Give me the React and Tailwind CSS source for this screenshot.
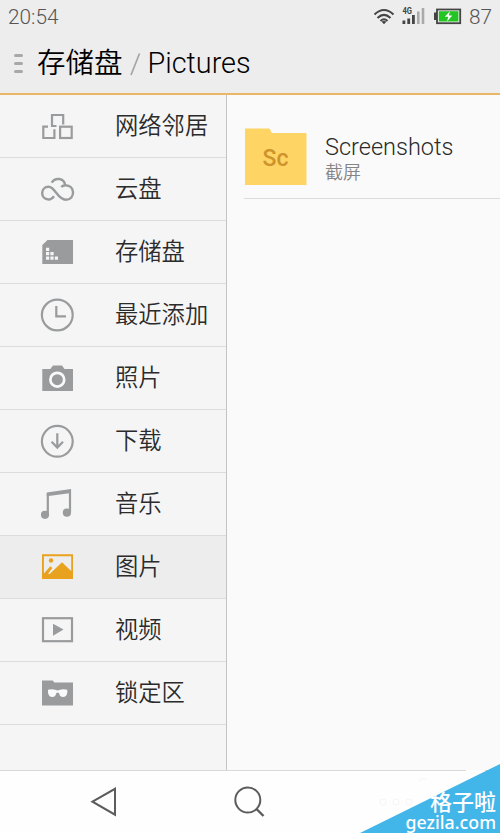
const GRAY = '#999b9d';

const icons = {
  network: (
    <g fill="none" stroke={GRAY} strokeWidth="2.200">
      <path d="M26.200 18.500V9H15V20H19.500" />
      <path d="M11 20.700H6.300V32H17.400V23.300" />
      <rect x="23.100" y="20.700" width="11.600" height="11.300" />
    </g>
  ),
  cloud: (
    <path
      d="M14.700 13.600C18 8.300 27 8.500 28.200 16.200C38.500 16 38.500 30.700 29 30.700C20.500 30.700 18 17.700 11.700 17.700C3 17.700 3 30.500 11.700 30.500Q14.500 30.500 17 27.200M28.200 16.200Q26 16.300 24.200 18"
      fill="none" stroke={GRAY} strokeWidth="2.400"
    />
  ),
  storage: (
    <g>
      <path d="M5.300 13L10.500 8H36V32H5.300Z" fill={GRAY} />
      <path d="M9 15.700h3.200v3.200h-3.200zM9 20.100h3.200v3.200h-3.200zM13.400 20.100h3.200v3.200h-3.200zM9 24.500h3.200v3.200h-3.200zM13.400 24.500h3.200v3.200h-3.200zM17.800 24.500h3.200v3.200h-3.200z" fill="#f5f5f5" />
    </g>
  ),
  clock: (
    <g fill="none" stroke={GRAY} strokeWidth="2.200">
      <circle cx="20.300" cy="20" r="15.400" />
      <path d="M19.300 11V21.300H29" />
    </g>
  ),
  camera: (
    <g>
      <path d="M5.300 11H13.300L16 7.500H25L27.500 11H36V33H5.300Z" fill={GRAY} />
      <circle cx="20.300" cy="21.700" r="6.900" fill="none" stroke="#fafafa" strokeWidth="2.700" />
    </g>
  ),
  download: (
    <g fill="none" stroke={GRAY} strokeWidth="2.200">
      <circle cx="20.300" cy="20.300" r="15.400" />
      <path d="M20.300 12.300V26.500M14.600 20.800L20.300 26.600L26 20.800" />
    </g>
  ),
  music: (
    <g>
      <path d="M10.800 31V10.200L33 7V28.500" fill="none" stroke={GRAY} strokeWidth="2.200" />
      <path d="M9.800 8.600L34 5V8.900L9.800 12.300Z" fill={GRAY} />
      <circle cx="8" cy="30.800" r="4.100" fill={GRAY} />
      <circle cx="29.900" cy="28.700" r="4.100" fill={GRAY} />
    </g>
  ),
  picture: (
    <g fill="#e9a21d">
      <path fillRule="evenodd" d="M5 7.300H36V32H5ZM6.900 9.200V26.500L13.300 19.200L15.400 21L11.200 26.600L12.400 27.200L25 15.300L34.200 24V9.200Z" />
      <circle cx="14" cy="13.500" r="2.200" />
    </g>
  ),
  video: (
    <g>
      <rect x="6" y="8.200" width="29" height="23" fill="none" stroke={GRAY} strokeWidth="2.200" />
      <path d="M16 13.700L26.500 19.600L16 25.700Z" fill={GRAY} />
    </g>
  ),
  locked: (
    <g>
      <path d="M5 7.500H15.800L17.300 9.500H36V32.500H5Z" fill={GRAY} />
      <path d="M11 16.800Q15 15.500 19 17Q20.600 17.800 22.200 17Q26 15.500 30.300 16.800V19.500Q29.500 24.100 26 24.100Q22.700 24 22 20.100Q20.600 18.700 19.400 20.100Q18.500 24 15.500 24.100Q11.700 24 11 19.500Z" fill="#fafafa" />
    </g>
  ),
};

const items = [
  ['network', '网络邻居'],
  ['cloud', '云盘'],
  ['storage', '存储盘'],
  ['clock', '最近添加'],
  ['camera', '照片'],
  ['download', '下载'],
  ['music', '音乐'],
  ['picture', '图片'],
  ['video', '视频'],
  ['locked', '锁定区'],
];

function StatusBar() {
  return (
    <div className="flex h-[33px] items-center pl-2 pr-2 text-[20.800px] text-[#555]">
      <span className="pt-0.5">20:54</span>
      <div className="ml-auto flex items-center">
        <svg width="92" height="26" viewBox="370 4 92 26">
          <g fill="none" stroke="#444" strokeWidth="2">
            <path d="M374.500 14.500Q384 5.500 393.500 14.500" />
            <path d="M377.500 18Q384 11.800 390.500 18" />
            <path d="M380.500 21Q384 17.600 387.500 21" />
          </g>
          <path d="M381.700 21.700Q384 20 386.300 21.700L384 24.200Z" fill="#444" />
          <text x="402.500" y="13.800" fontSize="8.500" fontWeight="700" fill="#444" textLength="9.500" lengthAdjust="spacingAndGlyphs">4G</text>
          <path d="M402.500 20.500h2.800v3.500h-2.800zM407.300 18.500h2.800v5.500h-2.800zM412 15h2.800v9h-2.800z" fill="#444" />
          <path d="M417 11.500h2.600v12.500h-2.600zM421.700 8h2.600v16h-2.600z" fill="#aaa" />
          <rect x="434" y="12.500" width="3" height="7.500" fill="#444" />
          <rect x="437" y="9.500" width="23.200" height="13.700" fill="#f3f3f3" stroke="#444" strokeWidth="1.800" />
          <rect x="438.800" y="11.200" width="19.600" height="10.300" fill="#23c423" />
          <path d="M450 11.300L444.800 16.800H448.300L447 21.400L452.300 15.600H448.800Z" fill="white" />
        </svg>
        <span className="ml-[7px] pt-0.5">87</span>
      </div>
    </div>
  );
}

function Header() {
  return (
    <header className="h-[95px] shrink-0 border-b-2 border-[#e9b766] bg-[#ededed]">
      <StatusBar />
      <div className="flex h-[60px] items-center pl-[14px]">
        <div className="flex w-[9px] flex-col gap-[5px]">
          <i className="h-[3px] rounded-full bg-[#a8a8a8]" />
          <i className="h-[3px] rounded-full bg-[#a8a8a8]" />
          <i className="h-[3px] rounded-full bg-[#a8a8a8]" />
        </div>
        <h1 className="ml-[14px] flex h-10 text-[28.800px] leading-[40px] font-[350] text-black">
          <span className="pt-px text-[28.500px]">存储盘</span>
          <svg className="ml-[7px] mt-[9px]" width="11" height="24"><path d="M1 23L9.500 1.500" stroke="#a5a5a5" strokeWidth="1.700" /></svg>
          <span className="ml-[7px]">Pictures</span>
        </h1>
      </div>
    </header>
  );
}

function Sidebar() {
  return (
    <nav className="w-[227px] shrink-0 border-r border-[#c4c4c4] bg-[#f5f5f5]">
      {items.map(([icon, label]) => (
        <div
          key={icon}
          className={`flex h-[63px] items-start border-b border-[#dcdcdc] pl-[37px] ${icon === 'picture' ? 'bg-[#ededed]' : ''}`}
        >
          <svg className="mt-[11px] shrink-0" width="40" height="40" viewBox="0 0 40 40">{icons[icon]}</svg>
          <span className="mt-[15px] ml-[38px] text-[23.300px] leading-8 whitespace-nowrap text-[#2b2b2b]">{label}</span>
        </div>
      ))}
    </nav>
  );
}

function FileList() {
  return (
    <main className="grow bg-[#fafafa] pl-[17px]">
      <div className="flex h-[104px] border-b border-[#dcdcdc]">
        <svg className="mt-[33px] shrink-0" width="64" height="58" viewBox="0 0 64 58">
          <path d="M1 .5H25.500L28 5H62.500V57H1Z" fill="#fed565" />
          <text x="31.500" y="37.500" textAnchor="middle" fontSize="23" fontWeight="500" fill="#cf932b">Sc</text>
        </svg>
        <div className="ml-[17px] mt-[38px]">
          <div className="text-[23.500px] leading-7 text-[#2b2b2b]">Screenshots</div>
          <div className="text-[18px] leading-[24px] text-[#858585]">截屏</div>
        </div>
      </div>
    </main>
  );
}

function NavBar() {
  return (
    <footer className="h-[63px] shrink-0 border-t border-[#d8d8d8] bg-[#fefefe]">
      <svg width="280" height="62" viewBox="0 771 280 62" fill="none" stroke="#5c5c5c" strokeWidth="2">
        <path d="M92.500 801.700L115 788.800V814.700Z" />
        <circle cx="247.800" cy="800" r="12.500" />
        <path d="M256.500 809L263.500 816" strokeWidth="2.400" />
      </svg>
    </footer>
  );
}

function Watermark() {
  return (
    <div className="absolute right-0 bottom-0 h-[78px] w-[150px]">
      <svg className="absolute inset-0" width="150" height="78" viewBox="350 755 150 78">
        <path d="M466 770H486L456 785H466Z" fill="#fefefe" />
        <path d="M360 833L500 764V833Z" fill="#43b6e9" />
        <g fill="none" stroke="#f5f5f5" strokeWidth="1">
          <circle cx="383" cy="802" r="3" />
          <circle cx="396" cy="802" r="3" />
          <circle cx="409" cy="802" r="3" />
          <path d="M419 781Q423 777 427 780" />
        </g>
      </svg>
      <div className="absolute right-[4px] bottom-[20px] text-[22px] leading-[20px] font-medium whitespace-nowrap text-white">格子啦</div>
      <div className="absolute right-[4px] bottom-[1px] font-['Noto_Sans','Open_Sans',sans-serif] text-[17.800px] leading-[19px] font-medium whitespace-nowrap text-white">gezila.com</div>
    </div>
  );
}

export default function App() {
  return (
    <div className="relative flex h-[833px] w-[500px] flex-col overflow-hidden bg-white font-['Roboto','Noto_Sans_CJK_SC',sans-serif] font-[350]">
      <Header />
      <div className="flex min-h-0 grow">
        <Sidebar />
        <FileList />
      </div>
      <NavBar />
      <Watermark />
    </div>
  );
}
